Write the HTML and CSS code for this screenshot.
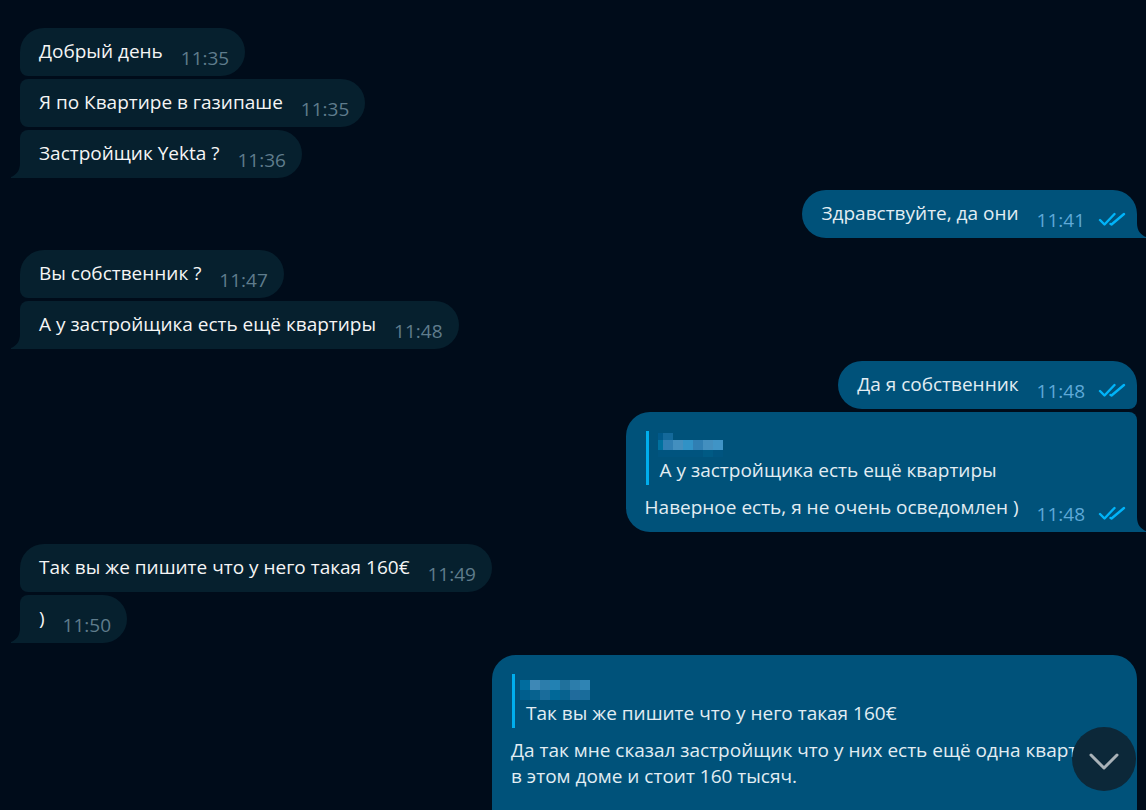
FILE: index.html
```html
<!DOCTYPE html>
<html lang="ru">
<head>
    <meta charset="UTF-8">
    <meta name="viewport" content="width=device-width, initial-scale=1.0">
    <title>Чат</title>
    <link rel="stylesheet" href="styles.css">
</head>
<body>
    <!-- Shared icons -->
    <svg class="icons" aria-hidden="true">
        <symbol id="checks" viewBox="0 0 28 14">
            <path d="M2 8l4.500 4.500L16.500 2M12.500 12l1 .5L26 2" />
        </symbol>
        <symbol id="tail" viewBox="0 0 9 15">
            <path d="M9 0v15H0v-1c5-2 9-6 9-14z" />
        </symbol>
    </svg>

    <main class="chat">
        <section class="group in">
            <div class="bubble">
                <p class="text">Добрый день</p>
                <time class="time">11:35</time>
            </div>
            <div class="bubble">
                <p class="text">Я по Квартире в газипаше</p>
                <time class="time">11:35</time>
            </div>
            <div class="bubble">
                <p class="text">Застройщик Yekta ?</p>
                <time class="time">11:36</time>
                <svg class="tail"><use href="#tail" /></svg>
            </div>
        </section>

        <section class="group out">
            <div class="bubble">
                <p class="text">Здравствуйте, да они</p>
                <time class="time">11:41</time>
                <svg class="checks"><use href="#checks" /></svg>
                <svg class="tail"><use href="#tail" /></svg>
            </div>
        </section>

        <section class="group in">
            <div class="bubble">
                <p class="text">Вы собственник ?</p>
                <time class="time">11:47</time>
            </div>
            <div class="bubble">
                <p class="text">А у застройщика есть ещё квартиры</p>
                <time class="time">11:48</time>
                <svg class="tail"><use href="#tail" /></svg>
            </div>
        </section>

        <section class="group out">
            <div class="bubble">
                <p class="text">Да я собственник</p>
                <time class="time">11:48</time>
                <svg class="checks"><use href="#checks" /></svg>
            </div>
            <div class="bubble with-reply">
                <blockquote class="reply">
                    <svg class="name" viewBox="0 0 65 24" shape-rendering="crispEdges">
                        <path fill="#00598a" d="M0 0h5v7H0z" />
                        <path fill="#14699a" d="M5 0h10v7H5z" />
                        <path fill="#00719f" d="M0 7h5v10H0z" />
                        <path fill="#307fb3" d="M5 7h10v10H5zM35 7h10v10H35z" />
                        <path fill="#438fbf" d="M15 7h10v10H15zM45 7h10v10H45z" />
                        <path fill="#3192c6" d="M25 7h10v10H25z" />
                        <path fill="#4094c6" d="M55 7h10v10H55z" />
                        <path fill="#00547f" d="M0 17h65v7H0z" />
                        <path fill="#005a84" d="M45 17h10v7H45z" />
                    </svg>
                    <p class="text">А у застройщика есть ещё квартиры</p>
                </blockquote>
                <div class="message">
                    <p class="text">Наверное есть, я не очень осведомлен )</p>
                    <time class="time">11:48</time>
                    <svg class="checks"><use href="#checks" /></svg>
                </div>
                <svg class="tail"><use href="#tail" /></svg>
            </div>
        </section>

        <section class="group in">
            <div class="bubble">
                <p class="text">Так вы же пишите что у него такая 160€</p>
                <time class="time">11:49</time>
            </div>
            <div class="bubble">
                <p class="text">)</p>
                <time class="time">11:50</time>
                <svg class="tail"><use href="#tail" /></svg>
            </div>
        </section>

        <section class="group out">
            <div class="bubble with-reply long">
                <blockquote class="reply">
                    <svg class="name wide" viewBox="0 0 70 20" shape-rendering="crispEdges">
                        <path fill="#006c9e" d="M0 0h10v10H0z" />
                        <path fill="#3e88b6" d="M10 0h10v10H10z" />
                        <path fill="#2c7dab" d="M20 0h10v10H20zM50 0h10v10H50z" />
                        <path fill="#2281b3" d="M30 0h10v10H30z" />
                        <path fill="#20719c" d="M40 0h10v10H40z" />
                        <path fill="#2f84b4" d="M60 0h10v10H60z" />
                        <path fill="#005e8d" d="M0 10h10v10H0z" />
                        <path fill="#07628f" d="M10 10h10v10H10zM40 10h10v10H40z" />
                        <path fill="#196c9b" d="M20 10h10v10H20zM60 10h10v10H60z" />
                        <path fill="#006898" d="M30 10h10v10H30z" />
                        <path fill="#206b9c" d="M50 10h10v10H50z" />
                    </svg>
                    <p class="text">Так вы же пишите что у него такая 160€</p>
                </blockquote>
                <div class="message">
                    <p class="text">Да так мне сказал застройщик что у них есть ещё одна квартира в этом доме и стоит 160 тысяч.</p>
                </div>
            </div>
        </section>
    </main>

    <button class="scroll-down" type="button" aria-label="Вниз">
        <svg viewBox="0 0 30 18"><path d="M2 2l13 13L28 2" /></svg>
    </button>
</body>
</html>
```
FILE: styles.css
```css
* {
    box-sizing: border-box;
}
body {
    margin: 0;
    background-color: #000c1a;
    color: #f5f5f5;
    font-family: "Open Sans", "Noto Sans", sans-serif;
    font-size: 19px;
    line-height: 26px;
}
p, blockquote {
    margin: 0;
}
.icons {
    display: none;
}
.chat {
    display: flex;
    flex-direction: column;
    gap: 12px;
    height: 100vh;
    padding: 28px 9px 0 20px;
    overflow: hidden;
}
.group {
    display: flex;
    flex-direction: column;
    flex-shrink: 0;
    gap: 3px;
}
.in {
    --bubble: #06202e;
    --time: #5f7c8c;
    align-items: flex-start;
}
.out {
    --bubble: #00527a;
    --time: #5ea9d8;
    align-items: flex-end;
    color: #e2edf3;
}

/* Bubbles */
.bubble {
    position: relative;
    display: flex;
    max-width: 645px;
    padding: 10px 16px 12px 19px;
    border-radius: 24px;
    background-color: var(--bubble);
}
.in .bubble {
    border-radius: 8px 24px 24px 8px;
}
.in .bubble:first-child {
    border-top-left-radius: 24px;
}
.in .bubble:last-child {
    border-bottom-left-radius: 0;
}
.out .bubble {
    padding-right: 11px;
    border-radius: 24px 8px 8px 24px;
}
.out .bubble:first-child {
    border-top-right-radius: 24px;
}
.out .bubble:last-child {
    border-bottom-right-radius: 0;
}
.out .with-reply {
    flex-direction: column;
    padding-top: 19px;
}
.out .long {
    padding-right: 19px;
    padding-bottom: 48px;
}
.message {
    display: flex;
}
.time {
    height: 26px;
    margin-left: 18px;
    padding-top: 7px;
    color: var(--time);
}
.checks {
    flex-shrink: 0;
    width: 28px;
    height: 14px;
    margin: 12px 0 0 13px;
    fill: none;
    stroke: #00b4f9;
    stroke-width: 2.4;
    stroke-linecap: round;
    stroke-linejoin: round;
}
.tail {
    position: absolute;
    bottom: 0;
    left: -9px;
    width: 9px;
    height: 15px;
    fill: var(--bubble);
}
.out .tail {
    right: -9px;
    left: auto;
    transform: scaleX(-1);
}

/* Quoted message */
.reply {
    height: 54px;
    margin: 0 0 9px 1px;
    padding-left: 11px;
    border-left: 3px solid #00aeed;
}
.name {
    display: block;
    width: 65px;
    height: 24px;
    margin: 2px 0 0 -2px;
}
.wide {
    width: 70px;
    height: 20px;
    margin: 6px 0 0 -6px;
}

.scroll-down {
    position: fixed;
    right: 10px;
    bottom: 19px;
    display: flex;
    align-items: center;
    justify-content: center;
    width: 64px;
    height: 64px;
    padding: 0;
    border: none;
    border-radius: 50%;
    background-color: #0c2839;
    cursor: pointer;
}
.scroll-down svg {
    width: 30px;
    height: 18px;
    margin-top: 6px;
    fill: none;
    stroke: #a9b2b8;
    stroke-width: 3;
    stroke-linecap: round;
    stroke-linejoin: round;
}
```
